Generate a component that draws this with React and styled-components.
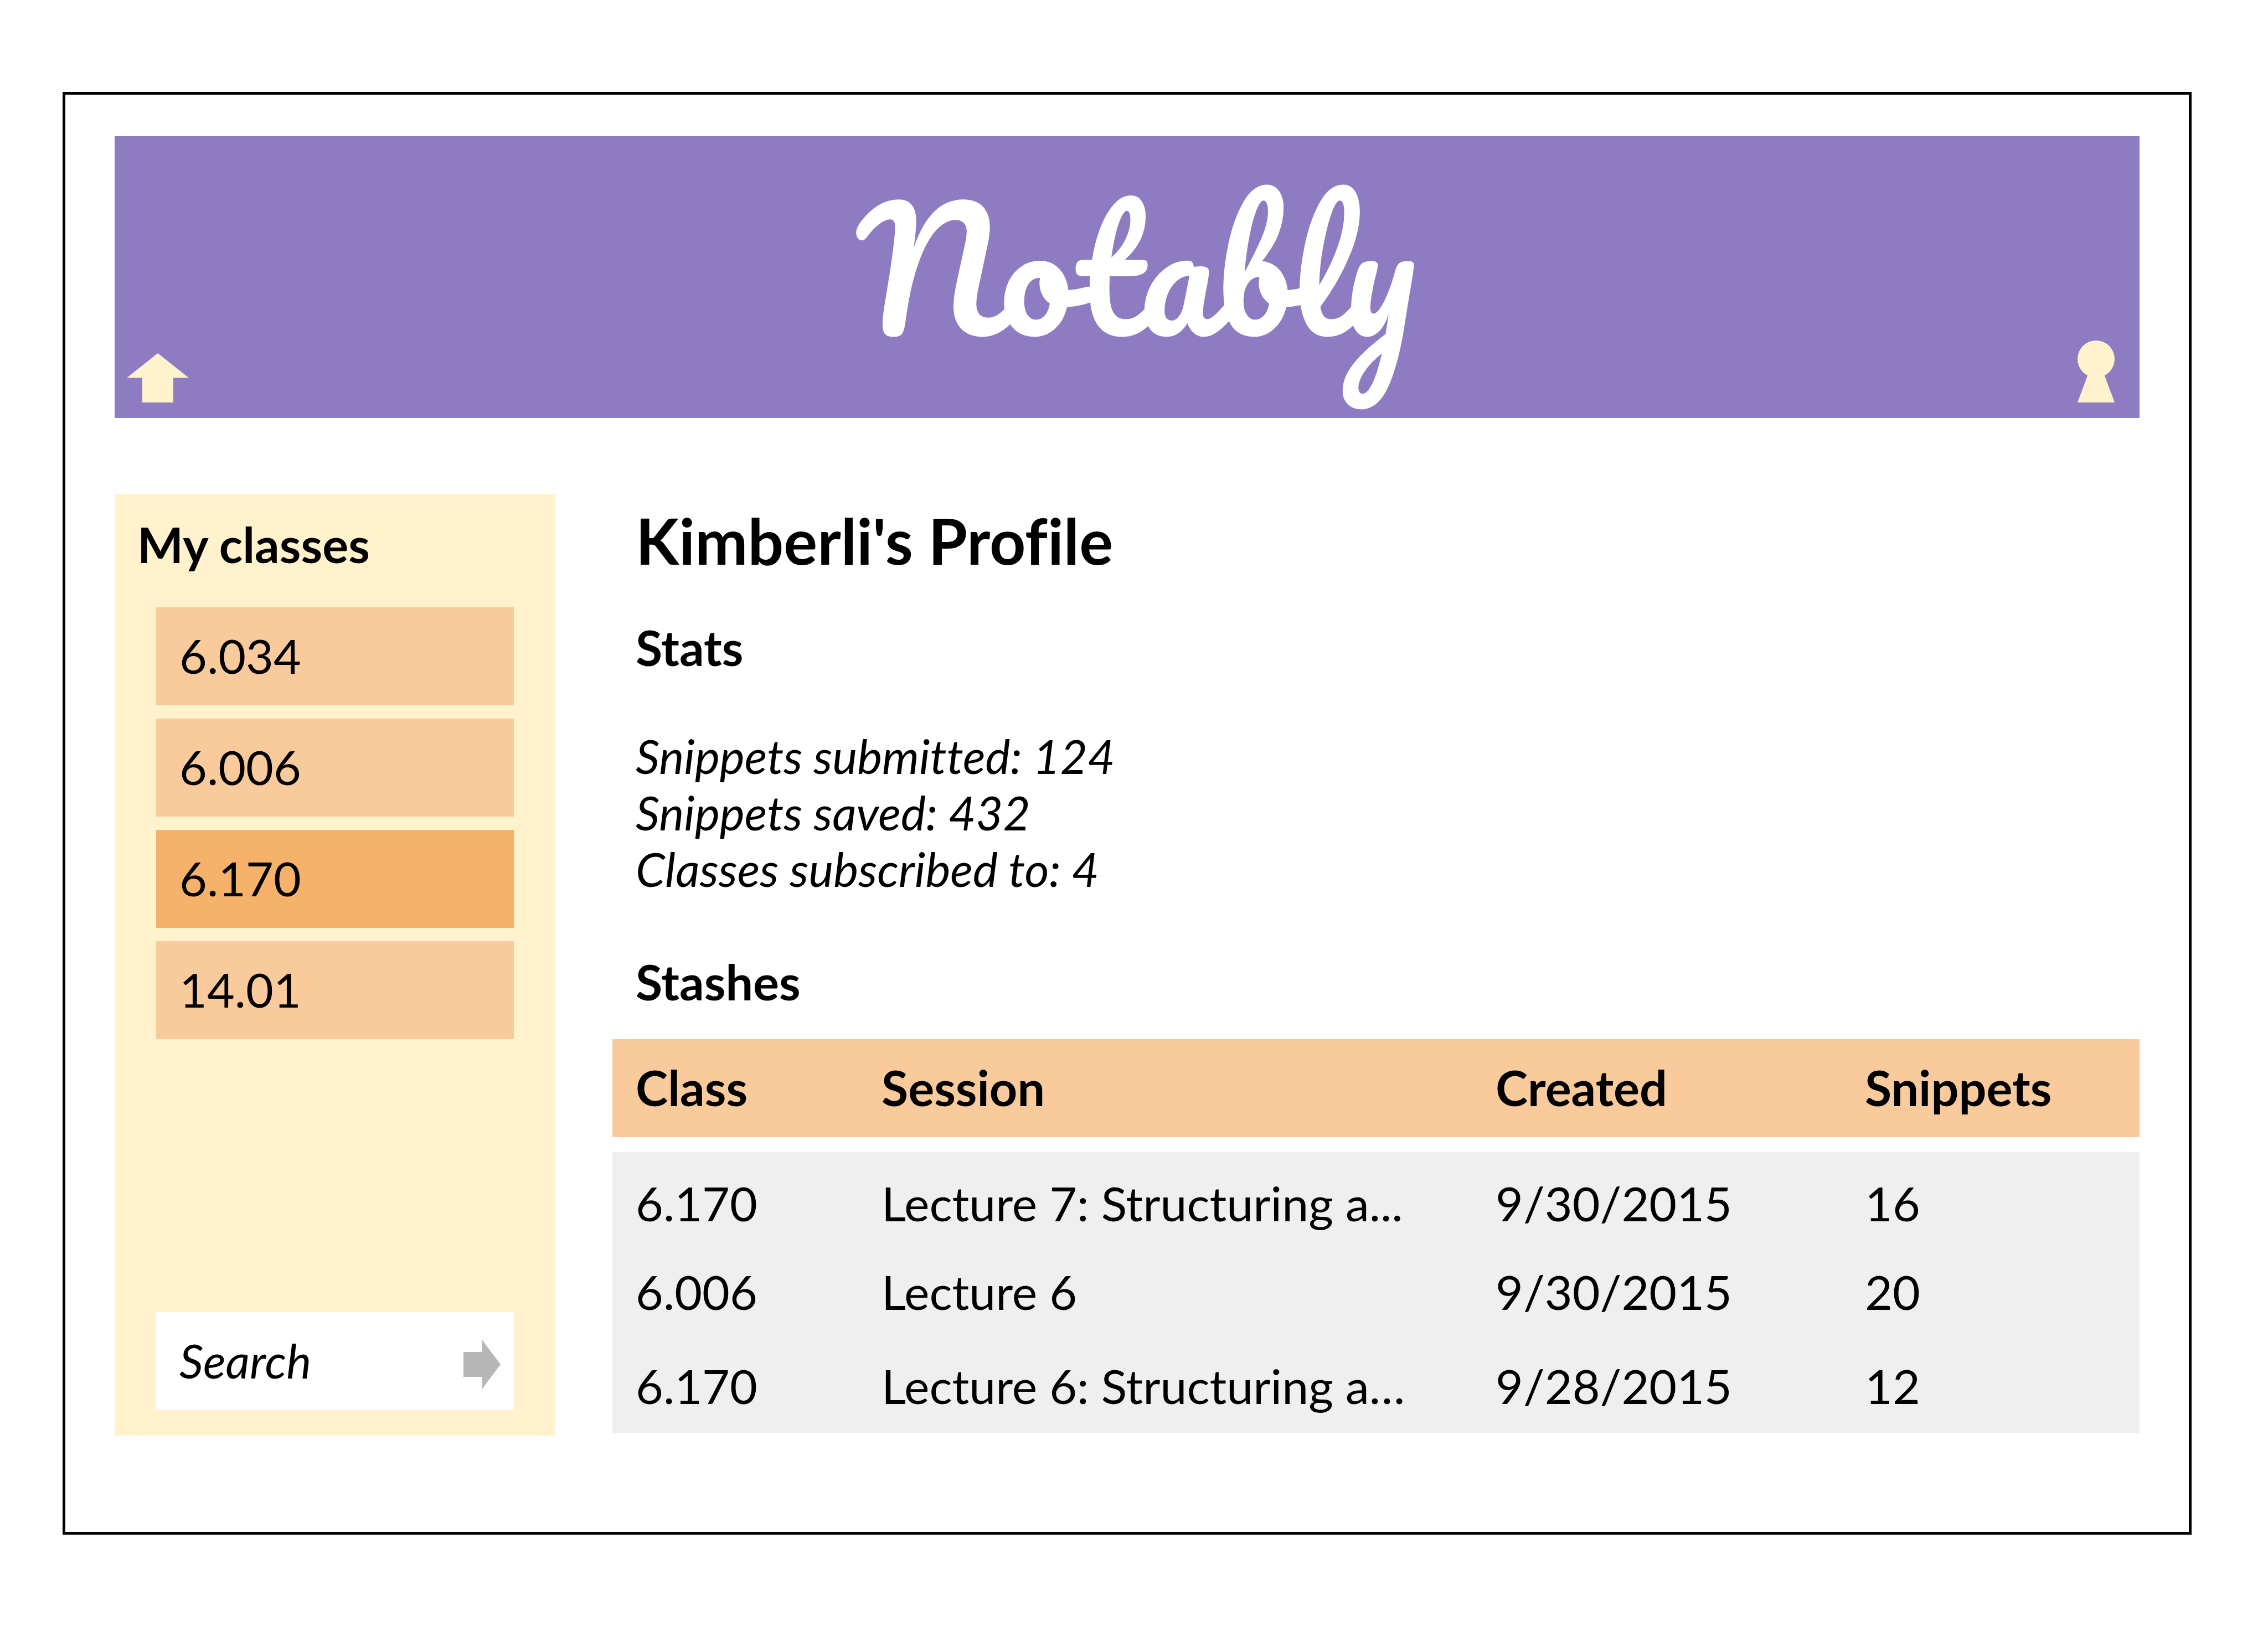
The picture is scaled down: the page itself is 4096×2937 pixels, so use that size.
import React from "react";
import styled, { createGlobalStyle } from "styled-components";

const GlobalStyle = createGlobalStyle`
  *, *::before, *::after { box-sizing: border-box; }
  body {
    margin: 0;
    background: #ffffff;
    color: #000000;
    font-family: Lato, "Liberation Sans", sans-serif;
    font-size: 86px;
    font-variant-ligatures: none;
    line-height: 102px;
  }
  h1, h2, h3, ul, p { margin: 0; padding: 0; }
  ul { list-style: none; }
  a { color: inherit; text-decoration: none; }
`;

const Page = styled.div`
  padding: 166px 138px 164px 113px;
`;

const Frame = styled.div`
  display: flex;
  flex-direction: column;
  gap: 137px;
  padding: 75px 89px 174px;
  border: 5px solid #000000;
`;

const Banner = styled.header`
  display: grid;
  grid-template-columns: auto 1fr auto;
  align-items: end;
  height: 509px;
  padding: 0 45px 28px 22px;
  background: #8e7cc3;
`;

const IconLink = styled.a`
  display: block;
  color: #fff2cc;

  svg { display: block; }
`;

const Wordmark = styled.h1`
  align-self: center;
  padding: 0 0 6px 10px;
  color: #ffffff;
  font-family: Pacifico, Lato, cursive;
  font-size: 291px;
  font-variant-ligatures: normal;
  font-weight: 400;
  line-height: 360px;
  text-align: center;
`;

const Content = styled.div`
  display: grid;
  grid-template-columns: minmax(0, 796fr) minmax(0, 2758fr);
  column-gap: 103px;
`;

const Sidebar = styled.aside`
  display: flex;
  flex-direction: column;
  padding: 40px 75px 46px;
  background: #fff2cc;
`;

const Heading = styled.h2`
  font-size: 88px;
  font-weight: 700;
  line-height: 102px;
`;

const SidebarHeading = styled(Heading)`
  margin: 0 -34px 63px;
`;

const ClassList = styled.ul`
  display: flex;
  flex-direction: column;
  gap: 24px;
`;

const ClassLink = styled.a`
  display: flex;
  align-items: center;
  height: 177px;
  padding: 0 42px 4px;
  background: ${({ $active }) => ($active ? "#f6b26b" : "#f9cb9c")};
`;

const SearchForm = styled.form`
  display: flex;
  align-items: center;
  height: 177px;
  margin-top: auto;
  padding-right: 24px;
  background: #ffffff;
`;

const SearchInput = styled.input`
  flex: 1;
  min-width: 0;
  height: 100%;
  padding: 0 0 4px 42px;
  border: 0;
  background: transparent;
  color: inherit;
  font: inherit;
  font-size: 85px;
  font-style: italic;

  &::placeholder { color: #000000; opacity: 1; }
`;

const SearchButton = styled.button`
  padding: 12px 0 0;
  border: 0;
  background: transparent;
  color: #b7b7b7;

  svg { display: block; }
`;

const Profile = styled.main`
  padding: 16px 0 5px;
`;

const Summary = styled.section`
  padding-left: 42px;
`;

const Title = styled.h2`
  margin-bottom: 74px;
  font-size: 114px;
  font-weight: 700;
  line-height: 136px;
`;

const Stats = styled.ul`
  margin: 94px 0 102px;
  font-size: 85px;
  font-style: italic;
`;

const Table = styled.table`
  display: flex;
  flex-direction: column;
  gap: 27px;
  margin-top: 53px;
`;

const TableHead = styled.thead`
  display: block;
  padding: 36px 0 39px;
  background: #f9cb9c;
`;

const TableBody = styled.tbody`
  display: flex;
  flex-direction: column;
  gap: 58px;
  padding: 41px 0 34px;
  background: #efefef;
`;

const Row = styled.tr`
  display: grid;
  grid-template-columns:
    minmax(0, 444fr) minmax(0, 1109fr) minmax(0, 667fr) minmax(0, 538fr);

  ${TableBody} &:last-child { padding-top: 10px; }
`;

const HeadCell = styled.th`
  padding: 0 0 0 42px;
  font-size: 88px;
  font-weight: 700;
  text-align: left;
  white-space: nowrap;
`;

const Cell = styled.td`
  padding: 0 0 0 42px;
  white-space: nowrap;
`;

const classes = ["6.034", "6.006", "6.170", "14.01"];

const stats = [
  ["Snippets submitted", 124],
  ["Snippets saved", 432],
  ["Classes subscribed to", 4],
];

const stashes = [
  ["6.170", "Lecture 7: Structuring a...", "9/30/2015", 16],
  ["6.006", "Lecture 6", "9/30/2015", 20],
  ["6.170", "Lecture 6: Structuring a\u2026", "9/28/2015", 12],
];

const HomeIcon = () => (
  <svg width="112" height="89" viewBox="0 0 112 89" aria-hidden="true">
    <path fill="currentColor" d="M56 0 112 44.5H84V89H28V44.5H0Z" />
  </svg>
);

const KeyholeIcon = () => (
  <svg width="67" height="112" viewBox="0 0 67 112" aria-hidden="true">
    <circle cx="33.5" cy="33.5" r="33.5" fill="currentColor" />
    <path fill="currentColor" d="M19 61H48L67 112H0Z" />
  </svg>
);

const ArrowIcon = () => (
  <svg width="67" height="89" viewBox="0 0 67 89" aria-hidden="true">
    <path fill="currentColor" d="M67 44.5 33.5 89V67H0V22H33.5V0Z" />
  </svg>
);

export default function App() {
  return (
    <Page>
      <GlobalStyle />
      <Frame>
        <Banner>
          <IconLink href="#home" aria-label="Home">
            <HomeIcon />
          </IconLink>
          <Wordmark>Notably</Wordmark>
          <IconLink href="#account" aria-label="Account">
            <KeyholeIcon />
          </IconLink>
        </Banner>
        <Content>
          <Sidebar>
            <SidebarHeading>My classes</SidebarHeading>
            <ClassList>
              {classes.map((name) => (
                <li key={name}>
                  <ClassLink href={`#${name}`} $active={name === "6.170"}>
                    {name}
                  </ClassLink>
                </li>
              ))}
            </ClassList>
            <SearchForm role="search" onSubmit={(event) => event.preventDefault()}>
              <SearchInput type="text" placeholder="Search" aria-label="Search" />
              <SearchButton type="submit" aria-label="Go">
                <ArrowIcon />
              </SearchButton>
            </SearchForm>
          </Sidebar>
          <Profile>
            <Summary>
              <Title>Kimberli's Profile</Title>
              <Heading as="h3">Stats</Heading>
              <Stats>
                {stats.map(([label, value]) => (
                  <li key={label}>{`${label}: ${value}`}</li>
                ))}
              </Stats>
              <Heading as="h3">Stashes</Heading>
            </Summary>
            <Table>
              <TableHead>
                <Row>
                  <HeadCell scope="col">Class</HeadCell>
                  <HeadCell scope="col">Session</HeadCell>
                  <HeadCell scope="col">Created</HeadCell>
                  <HeadCell scope="col">Snippets</HeadCell>
                </Row>
              </TableHead>
              <TableBody>
                {stashes.map(([course, session, created, snippets]) => (
                  <Row key={session}>
                    <Cell>{course}</Cell>
                    <Cell>{session}</Cell>
                    <Cell>{created}</Cell>
                    <Cell>{snippets}</Cell>
                  </Row>
                ))}
              </TableBody>
            </Table>
          </Profile>
        </Content>
      </Frame>
    </Page>
  );
}
